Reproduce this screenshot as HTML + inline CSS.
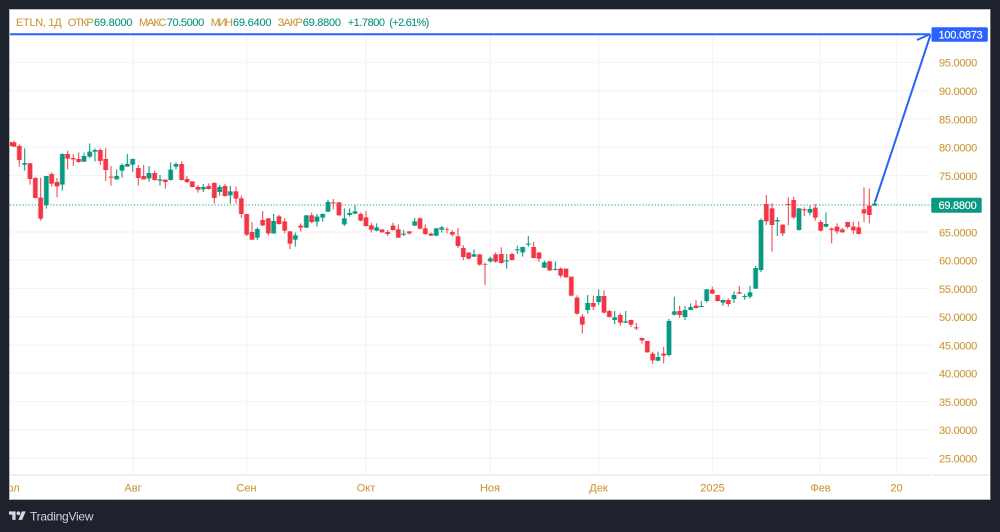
<!DOCTYPE html>
<html><head><meta charset="utf-8"><style>
html,body{margin:0;padding:0;background:#1e222d;width:1000px;height:532px;overflow:hidden}
svg{display:block;font-family:"Liberation Sans","Noto Sans CJK JP",sans-serif;filter:blur(.3px)}
.rw{stroke:#f5505d;stroke-width:3.4;fill:none}
.gw{stroke:#1a9f88;stroke-width:3.4;fill:none}
.rb{stroke:#f23645;stroke-width:13;fill:none}
.gb{stroke:#089981;stroke-width:13;fill:none}
.rh{stroke:#f23645;stroke-opacity:.25;stroke-width:18;fill:none}
.gh{stroke:#089981;stroke-opacity:.25;stroke-width:18;fill:none}
.p{fill:#cc9a3f;font-size:11px;letter-spacing:-.25px;text-anchor:middle;stroke:#cc9a3f;stroke-width:.12}
.t{fill:#cc9a3f;font-size:11px;text-anchor:middle;stroke:#cc9a3f;stroke-width:.12}
.h{font-size:11px}.o{fill:#cc9a3f;stroke:#cc9a3f;stroke-width:.12}.g{fill:#0f9680;stroke:#0f9680;stroke-width:.12}
</style></head><body>
<svg width="1000" height="532" viewBox="0 0 1000 532" xmlns="http://www.w3.org/2000/svg">
<defs>
<clipPath id="pn"><rect x="10" y="10" width="980" height="490"/></clipPath>
<path id="a" d="M42 37V50M58 48V90M90 100V147M106 144V204M122 203V266M155 132V161M171 156V169M203 72V86M220 84V88M236 87V96M301 60V93M317 87V120M333 140V143M415 114V144M431 138V148M464 129V150M496 149V156M545 102V150M561 147V156M577 154V171M594 171V179M626 168V177M643 159V204M675 168V198M708 184V206M724 205V252M740 252V314M756 306V329"/>
<path id="b" d="M74 99V104M139 138V225M187 72V164M252 78V95M269 65V80M285 60V65M350 138V148M366 105V122M382 102V110M398 87V104M447 129V145M480 148V152M512 119V150M528 102V110M610 171V178M659 171V186M691 184V196M772 297V323"/>
<path id="c" d="M38 90V106M55 85V130M87 79V102M104 94V122M120 124V161M152 107V113M185 76V96M250 37V40M267 37V76M332 72V92M348 82V108M364 106V119M396 118V127M413 126V132M429 107V120M445 118V143M478 124V130M510 85V116M526 115V132M543 131V137M591 117V119M607 126V134M624 139V168M640 174V201M656 188V206M689 193V224M705 222V224M737 193V215M754 192V219"/>
<path id="d" d="M71 93V130M136 136V149M169 76V113M201 80V95M218 72V83M234 36V65M283 85V103M299 69V75M315 64V71M380 112V122M461 131V134M494 94V107M559 115V137M575 112V119M672 193V200M721 205V214"/>
<path id="e" d="M36 72V90M101 51V84M117 68V86M149 94V121M182 116V137M198 116V142M214 140V197M231 203V251M247 260V284M280 219V230M312 198V248M328 243V261M361 255V278M393 270V284M409 292V295M426 324V331M442 333V367M458 371V391M491 371V377M539 243V255M588 227V234M637 179V191M653 195V213M685 210V222M718 187V191"/>
<path id="f" d="M20 91V94M52 58V61M68 51V67M85 41V44M133 97V113M166 117V120M263 219V240M296 198V216M344 262V270M377 274V278M474 381V392M507 273V375M523 244V254M555 240V261M572 231V240M604 228V231M620 178V213M669 210V218M702 195V207M734 198V201M750 187V200M767 114V176"/>
<path id="k" d="M79 72V124M96 85V135M128 134V160M145 72V75M161 60V112M193 88V91M226 83V113M242 126V152M275 146V150M291 140V154M307 148V157M323 126V141M340 140V151M356 142V162M372 88V100M388 77V105"/>
<path id="m" d="M63 120V270M112 120V124M177 85V150M210 87V98M258 132V140M404 70V77"/>
</defs>
<rect width="1000" height="532" fill="#1e222d"/>
<rect x="9" y="9" width="981.5" height="491" fill="#b8bac0"/>
<rect x="10" y="10" width="980" height="489" fill="#fff"/>
<g stroke="#f3f4f6" stroke-width="1.2">
<path d="M133.5 35V475M246.7 35V475M366 35V475M490.3 35V475M598.7 35V475M712.5 35V475M820.3 35V475M896.3 35V475"/>
<path d="M10 62.5H931M10 90.7H931M10 119H931M10 147.2H931M10 175.5H931M10 232H931M10 260.2H931M10 288.5H931M10 316.7H931M10 345H931M10 373.2H931M10 401.5H931M10 429.7H931M10 458H931"/>
</g>
<path d="M10 475H931M933 475H990" stroke="#e4e5ea" stroke-width="1.2"/>
<path d="M10 205H932" stroke="#089981" stroke-opacity=".75" stroke-width="1.2" stroke-dasharray="1.2 1.9"/>
<g clip-path="url(#pn)">
<rect x="10" y="142" width="2" height="4" fill="#f23645"/>
<g transform="translate(0,130) scale(.33333)">
<path class="rw" d="M42 32V50M58 43V110M90 99V164M106 142V205M122 143V272M155 127V170M171 144V202M203 62V118M220 72V108M236 67V98M301 55V105M317 54V153M333 108V167M415 105V167M431 105V149M464 122V152M496 148V176M545 94V152M561 138V159M577 154V172M594 165V188M626 160V179M643 156V221M675 162V200M708 170V221M724 197V264M740 252V318M756 276V330"/>
<path class="gw" d="M74 55V122M139 138V236M187 70V182M252 68V96M269 40V84M285 55V94M350 118V149M366 100V143M382 72V110M398 86V126M447 108V155M480 135V167M512 97V152M528 97V118M610 162V186M659 165V197M691 168V221M772 292V330"/>
<use href="#a" class="rh"/><use href="#b" class="gh"/><use href="#a" class="rb"/><use href="#b" class="gb"/>
</g>
<g transform="translate(250,190) scale(.33333)">
<path class="rw" d="M38 63V108M55 84V137M87 75V104M104 84V130M120 123V177M152 100V125M185 67V100M250 27V58M267 36V77M332 68V94M348 63V110M364 98V128M396 118V128M413 120V138M429 98V122M445 103V144M478 123V134M510 82V118M526 103V134M543 128V138M591 112V130M607 120V140M624 114V174M640 166V210M656 186V209M689 192V227M705 218V285M737 187V218M754 172V221"/>
<path class="gw" d="M71 72V132M136 128V170M169 75V114M201 72V110M218 70V95M234 30V66M283 55V108M299 55V80M315 44V73M380 100V124M461 120V138M494 84V108M559 114V138M575 108V128M672 178V201M721 200V218"/>
<use href="#c" class="rh"/><use href="#d" class="gh"/><use href="#c" class="rb"/><use href="#d" class="gb"/>
</g>
<g transform="translate(500,230) scale(.33333)">
<path class="rw" d="M36 68V92M101 36V85M117 66V96M149 93V123M182 112V143M198 116V143M214 140V199M231 196V254M247 252V311M280 197V240M312 181V250M328 240V263M361 250V287M393 269V291M409 279V300M426 323V341M442 333V368M458 365V402M491 351V400M539 227V264M588 210V236M637 170V192M653 195V215M685 205V230M718 168V192"/>
<path class="gw" d="M20 72V116M52 47V72M68 50V80M85 18V50M133 92V114M166 95V121M263 195V251M296 178V225M344 243V282M377 243V279M474 365V394M507 267V380M523 200V257M555 228V270M572 220V241M604 213V232M620 177V218M669 208V227M702 184V219M734 192V209M750 168V205M767 108V177"/>
<use href="#e" class="rh"/><use href="#f" class="gh"/><use href="#e" class="rb"/><use href="#f" class="gb"/>
</g>
<g transform="translate(740,180) scale(.33333)">
<path class="rw" d="M79 45V135M96 70V215M128 133V168M145 52V136M161 50V117M193 82V108M226 72V122M242 120V155M275 142V190M291 130V162M307 144V158M323 125V146M340 125V162M356 124V163M372 22V126M388 26V130"/>
<path class="gw" d="M63 115V276M112 112V168M177 84V152M210 77V106M258 97V142M404 62V78"/>
<use href="#k" class="rh"/><use href="#m" class="gh"/><use href="#k" class="rb"/><use href="#m" class="gb"/>
</g>
</g>
<path d="M10 34.2H930" stroke="#2962ff" stroke-width="2" fill="none"/>
<path d="M875 202L930.5 35M917 40L930.5 34" stroke="#2962ff" stroke-width="2" fill="none"/>
<g class="h">
<text class="o" x="16" y="26" textLength="45.7">ETLN, 1Д</text>
<text class="o" x="67.7" y="26" textLength="26">ОТКР</text>
<text class="g" x="94" y="26" textLength="38.5">69.8000</text>
<text class="o" x="139" y="26" textLength="27.5">МАКС</text>
<text class="g" x="166.7" y="26" textLength="37.5">70.5000</text>
<text class="o" x="210.7" y="26" textLength="22.3">МИН</text>
<text class="g" x="233" y="26" textLength="38.5">69.6400</text>
<text class="o" x="277.7" y="26" textLength="25">ЗАКР</text>
<text class="g" x="302.7" y="26" textLength="38.3">69.8800</text>
<text class="g" x="347.7" y="26" textLength="37.3">+1.7800</text>
<text class="g" x="389.3" y="26" textLength="40">(+2.61%)</text>
</g>
<g>
<text class="p" x="958" y="66.5">95.0000</text>
<text class="p" x="958" y="95">90.0000</text>
<text class="p" x="958" y="123.5">85.0000</text>
<text class="p" x="958" y="151.5">80.0000</text>
<text class="p" x="958" y="180">75.0000</text>
<text class="p" x="958" y="236.5">65.0000</text>
<text class="p" x="958" y="264.5">60.0000</text>
<text class="p" x="958" y="293">55.0000</text>
<text class="p" x="958" y="321">50.0000</text>
<text class="p" x="958" y="349.5">45.0000</text>
<text class="p" x="958" y="377.5">40.0000</text>
<text class="p" x="958" y="406">35.0000</text>
<text class="p" x="958" y="434">30.0000</text>
<text class="p" x="958" y="462.5">25.0000</text>
</g>
<rect x="931.5" y="27.3" width="56.3" height="14.4" rx="1.5" fill="#2962ff"/>
<text x="960.5" y="38.6" fill="#fff" stroke="#fff" stroke-width=".15" font-size="11" letter-spacing="-.25" text-anchor="middle">100.0873</text>
<rect x="931.3" y="197.7" width="50.4" height="15" rx="1" fill="#089981"/>
<text x="957.5" y="209.2" fill="#fff" stroke="#fff" stroke-width=".15" font-size="11" letter-spacing="-.25" text-anchor="middle">69.8800</text>
<g clip-path="url(#pn)">
<text class="t" x="8.5" y="491.5">Июл</text>
<text class="t" x="133" y="491.5">Авг</text>
<text class="t" x="246.5" y="491.5">Сен</text>
<text class="t" x="366" y="491.5">Окт</text>
<text class="t" x="490" y="491.5">Ноя</text>
<text class="t" x="598.5" y="491.5">Дек</text>
<text class="t" x="712.5" y="491.5">2025</text>
<text class="t" x="820.5" y="491.5">Фев</text>
<text class="t" x="896.5" y="491.5">20</text>
</g>
<g transform="translate(9,509.5) scale(.47)" fill="#d6d8de">
<path d="M14 22H7V11H0V4h14v18zM28 22h-8l7.5-18h8L28 22z"/><circle cx="20" cy="8" r="4"/>
</g>
<text x="30" y="520.3" fill="#d1d4dc" font-size="12" textLength="63.5">TradingView</text>
</svg>
</body></html>
